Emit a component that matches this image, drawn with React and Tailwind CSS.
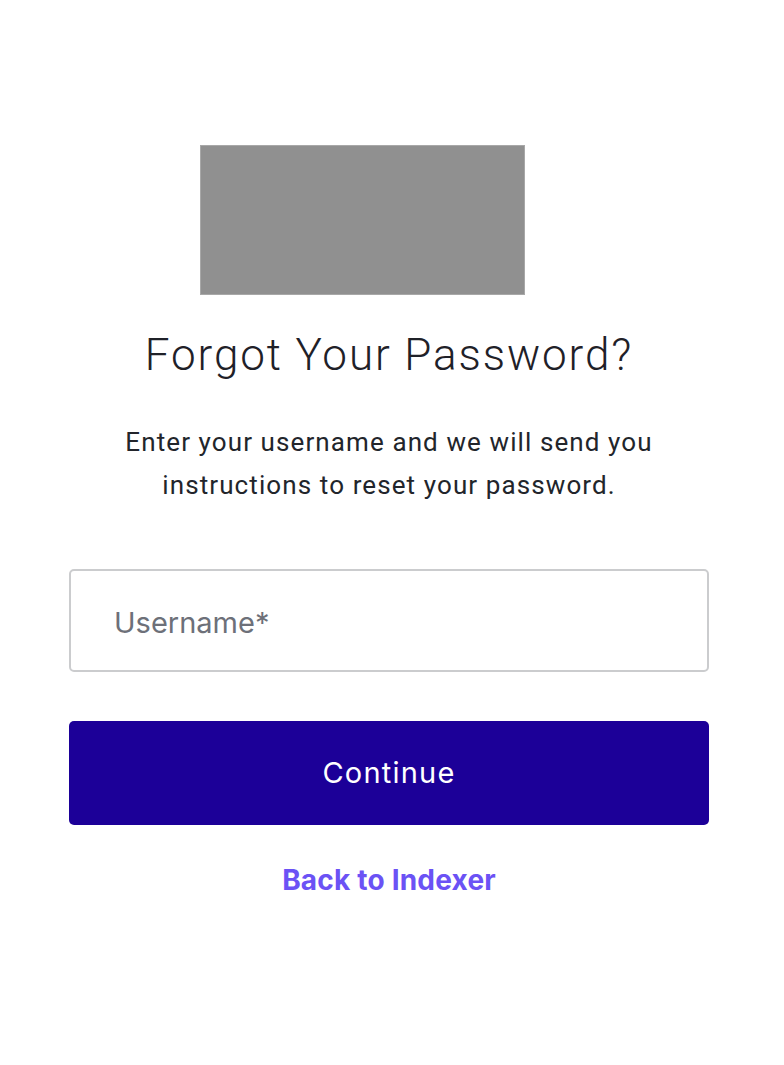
import React, { useState } from 'react';

const ForgotPassword = () => {
    const [username, setUsername] = useState('');

    const handleSubmit = (e) => {
        e.preventDefault();
    };

    return (
        <div className="min-h-[1065px] w-[778px] bg-white px-[69px] pt-[145px]">
            {/* Logo placeholder */}
            <div className="ml-[131px] h-[150px] w-[325px] bg-[#909090] border border-[#a8a8a8]" />

            <h1 className="mt-[34px] text-center text-[44px] leading-[52px] text-[#1f2128] font-['Roboto',sans-serif] font-light tracking-[1.9px]">
                Forgot Your Password?
            </h1>

            <p className="mt-[40px] text-center text-[26px] leading-[43px] text-[#22252b] font-['Roboto',sans-serif] tracking-[1.1px]">
                Enter your username and we will send you
                <br />
                instructions to reset your password.
            </p>

            <form onSubmit={handleSubmit} className="mt-[62px] flex flex-col">
                <input
                    type="text"
                    value={username}
                    onChange={(e) => setUsername(e.target.value)}
                    placeholder="Username*"
                    className="h-[103px] w-full rounded-[5px] border-2 border-[#cbccce] bg-white px-[43px] pt-[3px] text-[29px] text-[#22252b] placeholder-[#6d7079] font-['Inter',sans-serif] focus:outline-none"
                />
                <button
                    type="submit"
                    className="mt-[49px] h-[104px] w-full rounded-[5px] bg-[#1c0098] text-[29px] tracking-[1.2px] text-white font-['Inter',sans-serif]"
                >
                    Continue
                </button>
            </form>

            <div className="mt-[34px] text-center">
                <a href="#" className="text-[28px] font-bold tracking-[0.2px] text-[#6b52f5] font-['Inter',sans-serif]">
                    Back to Indexer
                </a>
            </div>
        </div>
    );
};

export default function App() {
    return <ForgotPassword />;
}
